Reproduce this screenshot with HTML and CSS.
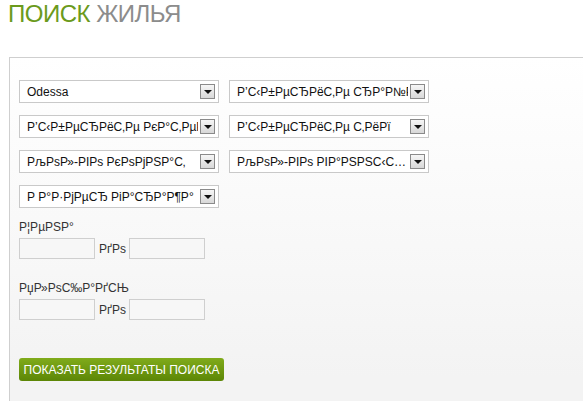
FILE: index.html
```html
<!DOCTYPE html>
<html lang="ru">
<head>
<meta charset="utf-8">
<title>Поиск жилья</title>
<link rel="stylesheet" href="styles.css">
</head>
<body>
<h1 class="title"><span class="title-green">ПОИСК</span> <span class="title-gray">ЖИЛЬЯ</span></h1>
<div class="panel">
  <div class="selects">
    <div class="select"><span class="select-text">Odessa</span><span class="arrow"></span></div>
    <div class="select"><span class="select-text">Р’С‹Р±РµСЂРёС‚Рµ СЂР°Р№РѕРЅ</span><span class="arrow"></span></div>
    <div class="select"><span class="select-text">Р’С‹Р±РµСЂРёС‚Рµ РєР°С‚РµРіРѕСЂРёСЋ</span><span class="arrow"></span></div>
    <div class="select"><span class="select-text">Р’С‹Р±РµСЂРёС‚Рµ С‚РёРї</span><span class="arrow"></span></div>
    <div class="select"><span class="select-text">РљРѕР»-РІРѕ РєРѕРјРЅР°С‚</span><span class="arrow"></span></div>
    <div class="select"><span class="select-text">РљРѕР»-РІРѕ РІР°РЅРЅС‹С…</span><span class="arrow"></span></div>
    <div class="select"><span class="select-text">Р Р°Р·РјРµСЂ РіР°СЂР°Р¶Р°</span><span class="arrow"></span></div>
  </div>
  <div class="range range-price">
    <div class="range-label">Р¦РµРЅР°</div>
    <div class="range-row"><span class="input"></span><span class="range-sep">РґРѕ</span><span class="input"></span></div>
  </div>
  <div class="range range-area">
    <div class="range-label">РџР»РѕС‰Р°РґСЊ</div>
    <div class="range-row"><span class="input"></span><span class="range-sep">РґРѕ</span><span class="input"></span></div>
  </div>
  <button class="submit" type="button">ПОКАЗАТЬ РЕЗУЛЬТАТЫ ПОИСКА</button>
</div>
</body>
</html>
```
FILE: styles.css
```css
html, body {
  margin: 0;
  padding: 0;
  overflow: hidden;
  background: #fff;
}
body {
  padding-left: 8px;
  font-family: "Liberation Sans", Arial, sans-serif;
  color: #222;
  font-size: 12px;
}
.title {
  margin: 0;
  font-size: 24px;
  font-weight: normal;
  line-height: 28px;
  letter-spacing: -0.5px;
  white-space: nowrap;
}
.title-green { color: #6b9a1c; }
.title-gray { color: #8c8c8c; }
.panel {
  box-sizing: border-box;
  margin-top: 29px;
  margin-left: 1px;
  width: 574px;
  height: 344px;
  border-top: 1px solid #cfcfcf;
  border-left: 1px solid #cfcfcf;
  background: linear-gradient(#ffffff, #f3f3f3 320px);
  padding: 22px 0 0 9px;
}
.selects {
  display: grid;
  grid-template-columns: 200px 200px;
  column-gap: 10px;
  row-gap: 12px;
}
.select {
  height: 23px;
  box-sizing: border-box;
  border: 1px solid #c9c9c9;
  background: #fff;
  display: flex;
  align-items: center;
  padding: 0 3px 0 7px;
}
.select-text {
  flex: 1;
  overflow: hidden;
  white-space: nowrap;
  color: #111;
  font-size: 12px;
}
.arrow {
  flex: none;
  width: 15px;
  height: 15px;
  box-sizing: border-box;
  border: 1px solid #8a8a8a;
  background: linear-gradient(#f6f6f6, #d8d8d8);
  margin-left: 2px;
  position: relative;
}
.arrow::after {
  content: "";
  position: absolute;
  left: 3px;
  top: 5px;
  border-left: 4px solid transparent;
  border-right: 4px solid transparent;
  border-top: 4px solid #111;
}
.range-label {
  color: #333;
  line-height: 15px;
  margin-bottom: 3px;
}
.range-price { margin-top: 12px; }
.range-area { margin-top: 22px; }
.range-row {
  display: flex;
  align-items: center;
}
.input {
  width: 76px;
  height: 21px;
  box-sizing: border-box;
  border: 1px solid #cfcfcf;
  background: #f7f7f7;
}
.range-sep {
  margin: 0 3px 0 4px;
  color: #333;
}
.submit {
  display: block;
  margin-top: 38px;
  width: 205px;
  height: 23px;
  border: none;
  border-radius: 3px;
  background: linear-gradient(#80ab1b, #5c8606);
  color: #fff;
  font-family: "Liberation Sans", Arial, sans-serif;
  font-size: 12px;
  padding: 0;
  white-space: nowrap;
}
```
